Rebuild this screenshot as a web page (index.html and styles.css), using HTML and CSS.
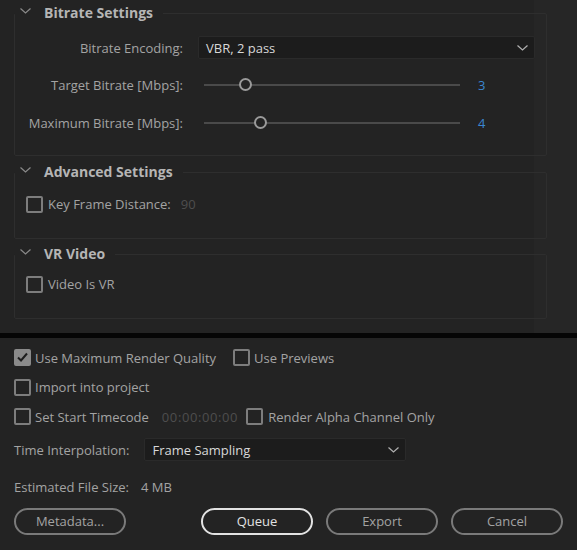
FILE: index.html
```html
<!DOCTYPE html>
<html lang="en">
<head>
    <meta charset="UTF-8">
    <meta name="viewport" content="width=device-width, initial-scale=1.0">
    <title>Export Settings</title>
    <link rel="stylesheet" href="styles.css">
</head>
<body>
    <div class="settings">
        <div class="panels">
            <fieldset class="panel panel-bitrate">
                <legend>
                    <svg class="chevron" width="11" height="6" viewBox="0 0 11 6"><path d="M0.5 0.5 L5.5 5 L10.5 0.5" fill="none" stroke="#8a8a8a" stroke-width="1.2"/></svg>
                    <span>Bitrate Settings</span>
                </legend>
                <div class="grid">
                    <label class="label">Bitrate Encoding:</label>
                    <div class="select select-wide">
                        <span>VBR, 2 pass</span>
                        <svg width="11" height="6" viewBox="0 0 11 6"><path d="M0.5 0.5 L5.5 5 L10.5 0.5" fill="none" stroke="#b0b0b0" stroke-width="1.2"/></svg>
                    </div>

                    <label class="label">Target Bitrate [Mbps]:</label>
                    <div class="slider-row">
                        <div class="track"><span class="thumb" style="left: 41px"></span></div>
                        <span class="value">3</span>
                    </div>

                    <label class="label">Maximum Bitrate [Mbps]:</label>
                    <div class="slider-row">
                        <div class="track"><span class="thumb" style="left: 56px"></span></div>
                        <span class="value">4</span>
                    </div>
                </div>
            </fieldset>

            <fieldset class="panel panel-advanced">
                <legend>
                    <svg class="chevron" width="11" height="6" viewBox="0 0 11 6"><path d="M0.5 0.5 L5.5 5 L10.5 0.5" fill="none" stroke="#8a8a8a" stroke-width="1.2"/></svg>
                    <span>Advanced Settings</span>
                </legend>
                <div class="check-row">
                    <span class="box"></span>
                    <span class="text">Key Frame Distance:</span>
                    <span class="dim">90</span>
                </div>
            </fieldset>

            <fieldset class="panel panel-vr">
                <legend>
                    <svg class="chevron" width="11" height="6" viewBox="0 0 11 6"><path d="M0.5 0.5 L5.5 5 L10.5 0.5" fill="none" stroke="#8a8a8a" stroke-width="1.2"/></svg>
                    <span>VR Video</span>
                </legend>
                <div class="check-row">
                    <span class="box"></span>
                    <span class="text">Video Is VR</span>
                </div>
            </fieldset>
        </div>
    </div>

    <div class="divider"></div>

    <div class="footer">
        <div class="check-line">
            <span class="box checked">
                <svg width="13" height="13" viewBox="0 0 13 13"><path d="M2 6.5 L5 9.5 L11 2.5" fill="none" stroke="#1e1e1e" stroke-width="2"/></svg>
            </span>
            <span class="text">Use Maximum Render Quality</span>
            <span class="box box-previews"></span>
            <span class="text">Use Previews</span>
        </div>
        <div class="check-line">
            <span class="box"></span>
            <span class="text">Import into project</span>
        </div>
        <div class="check-line">
            <span class="box"></span>
            <span class="text">Set Start Timecode</span>
            <span class="dim timecode">00:00:00:00</span>
            <span class="box box-alpha"></span>
            <span class="text">Render Alpha Channel Only</span>
        </div>
        <div class="interp">
            <span class="text">Time Interpolation:</span>
            <div class="select select-interp">
                <span>Frame Sampling</span>
                <svg width="11" height="6" viewBox="0 0 11 6"><path d="M0.5 0.5 L5.5 5 L10.5 0.5" fill="none" stroke="#b0b0b0" stroke-width="1.2"/></svg>
            </div>
        </div>
        <div class="filesize">Estimated File Size:<span class="size">4 MB</span></div>
        <div class="buttons">
            <button class="btn">Metadata...</button>
            <div class="btn-group">
                <button class="btn btn-primary">Queue</button>
                <button class="btn">Export</button>
                <button class="btn">Cancel</button>
            </div>
        </div>
    </div>
</body>
</html>
```

FILE: styles.css
```css
body {
    margin: 0;
    width: 577px;
    height: 550px;
    overflow: hidden;
    background-color: #232323;
    font-family: "Open Sans", "Segoe UI", sans-serif;
    font-size: 13px;
    color: #a3a3a3;
}
.settings {
    height: 333px;
    background-color: #262626;
}
.panels {
    width: 534px;
    height: 333px;
    box-sizing: border-box;
    padding: 4px 0 0 14px;
    background-color: #232323;
}
.panel {
    margin: 0;
    padding: 0;
    border: 1px solid #2e2e2e;
    border-radius: 2px;
    width: 533px;
    box-sizing: border-box;
}
.panel + .panel {
    margin-top: 7px;
}
legend {
    padding: 0 10px 0 5px;
    margin-left: 0;
    display: flex;
    align-items: center;
    font-weight: bold;
    font-size: 14px;
    color: #b5b5b5;
    line-height: 18px;
}
.chevron {
    margin-right: 13px;
    margin-top: -4px;
}
.panel-bitrate {
    height: 152px;
}
.panel-advanced {
    height: 76px;
}
.panel.panel-vr {
    height: 74px;
    margin-top: 6px;
}
.grid {
    display: grid;
    grid-template-columns: 168px 1fr;
    column-gap: 15px;
    row-gap: 0;
    align-items: center;
    grid-auto-rows: 37.5px;
    padding: 7px 11px 0 0;
}
.label {
    text-align: right;
}
.select {
    display: flex;
    align-items: center;
    justify-content: space-between;
    height: 23px;
    box-sizing: border-box;
    padding: 0 6px 0 7px;
    background-color: #1c1c1c;
    border: 1px solid #2a2a2a;
    border-radius: 2px;
    color: #d8d8d8;
}
.slider-row {
    display: flex;
    align-items: center;
    padding-left: 6px;
}
.track {
    position: relative;
    width: 256px;
    height: 2px;
    background-color: #4a4a4a;
}
.thumb {
    position: absolute;
    top: -6px;
    width: 9px;
    height: 9px;
    margin-left: -6px;
    border: 2px solid #9a9a9a;
    border-radius: 50%;
    background-color: #232323;
}
.value {
    margin-left: 18px;
    color: #3a86d0;
}
.check-row {
    display: flex;
    align-items: center;
    padding: 14px 0 0 11px;
}
.panel-vr .check-row {
    padding-top: 12px;
}
.box {
    display: inline-flex;
    align-items: center;
    justify-content: center;
    width: 17px;
    height: 17px;
    box-sizing: border-box;
    border: 2px solid #7d7d7d;
    border-radius: 2px;
    flex-shrink: 0;
}
.box.checked {
    background-color: #8a8a8a;
    border-color: #8a8a8a;
}
.check-row .text {
    margin-left: 5px;
}
.dim {
    color: #4e4e4e;
    margin-left: 10px;
}
.divider {
    height: 5px;
    background-color: #050505;
}
.footer {
    padding: 5px 14px 0 14px;
}
.check-line {
    display: flex;
    align-items: center;
    height: 29.5px;
}
.check-line .box + .text {
    margin-left: 4px;
}
.box-previews {
    margin-left: 17px;
}
.timecode {
    margin-left: 13px;
    letter-spacing: 0.6px;
}
.box-alpha {
    margin-left: 8px;
}
.check-line .box-alpha + .text {
    margin-left: 5px;
}
.interp {
    display: flex;
    align-items: center;
    margin-top: 6px;
    height: 24px;
}
.select-interp {
    margin-left: 15px;
    width: 262px;
}
.filesize {
    margin-top: 15px;
    height: 20px;
    line-height: 20px;
}
.size {
    margin-left: 12px;
}
.buttons {
    display: flex;
    justify-content: space-between;
    margin-top: 11px;
}
.btn-group {
    display: flex;
    gap: 13px;
}
.btn {
    width: 112px;
    height: 27px;
    border: 2px solid #7a7a7a;
    border-radius: 14px;
    background-color: transparent;
    color: #a3a3a3;
    font-family: inherit;
    font-size: 13px;
    padding: 0;
}
.btn-primary {
    border-color: #e2e2e2;
    color: #e2e2e2;
}
```
